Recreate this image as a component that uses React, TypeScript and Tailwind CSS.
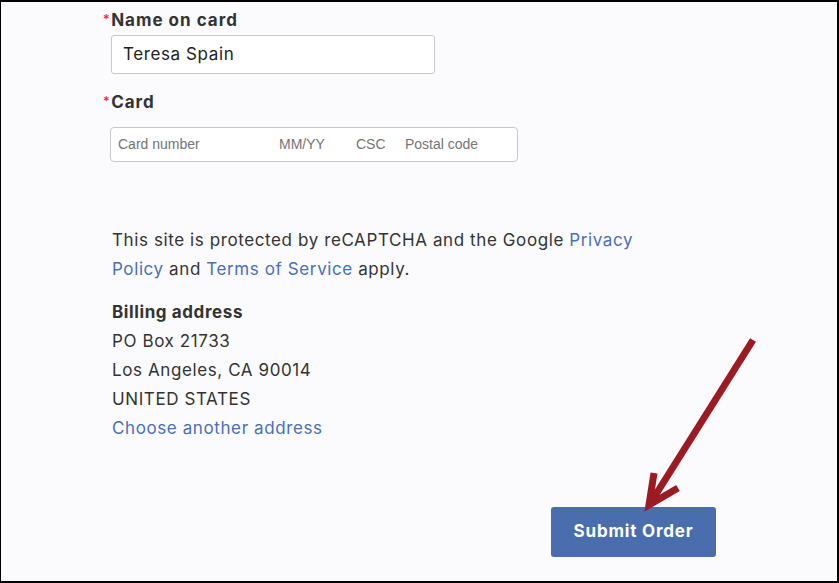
import React from "react";

// Checkout payment section with an annotation arrow pointing at the submit button
export default function App() {
  return (
    <div
      className="relative w-[839px] h-[583px] bg-[#fbfbfe] border-t-2 border-l border-r-2 border-b-2 border-black overflow-hidden text-[#333333] tracking-[0.6px]"
      style={{ fontFamily: "Inter, 'Noto Sans', sans-serif" }}
    >
      <div className="pl-[102px] pt-[7px]">
        {/* Name on card */}
        <div className="flex items-start">
          <span className="text-[#e02020] text-[13px] leading-none mt-[4px] mr-[1px]">*</span>
          <span className="text-[17px] font-bold leading-[22px] text-[#333] tracking-[1px]">Name on card</span>
        </div>
        <div className="ml-[8px] mt-[4px] w-[324px] h-[39px] bg-white border border-[#c8c8c8] rounded-[3px] flex items-center px-[11px]">
          <span className="text-[17px] text-[#222]">Teresa Spain</span>
        </div>

        {/* Card */}
        <div className="flex items-start mt-[17px]">
          <span className="text-[#e02020] text-[13px] leading-none mt-[4px] mr-[1px]">*</span>
          <span className="text-[17px] font-bold leading-[22px] text-[#333] tracking-[1px]">Card</span>
        </div>
        <div
          className="ml-[7px] mt-[14px] w-[408px] h-[35px] bg-white border border-[#c8c8c8] rounded-[4px] flex items-center text-[14px] text-[#757575] tracking-normal"
          style={{ fontFamily: "'Liberation Sans', Arial, sans-serif" }}
        >
          <span className="ml-[7px] w-[161px]">Card number</span>
          <span className="w-[77px]">MM/YY</span>
          <span className="w-[49px]">CSC</span>
          <span>Postal code</span>
        </div>

        {/* reCAPTCHA notice */}
        <p className="ml-[9px] mt-[64px] w-[545px] text-[17px] leading-[29px] text-[#333]">
          This site is protected by reCAPTCHA and the Google{" "}
          <a className="text-[#4a6fb5]">Privacy Policy</a> and{" "}
          <a className="text-[#4a6fb5]">Terms of Service</a> apply.
        </p>

        {/* Billing address */}
        <div className="ml-[9px] mt-[14px] text-[17px] leading-[29px] text-[#333]">
          <div className="font-bold">Billing address</div>
          <div>PO Box 21733</div>
          <div>Los Angeles, CA 90014</div>
          <div>UNITED STATES</div>
          <a className="text-[#4a6fb5]">Choose another address</a>
        </div>

        <div className="flex ml-[448px] mt-[64px]">
          <button className="w-[165px] h-[50px] bg-[#4a6dae] rounded-[3px] text-white text-[17px] font-bold tracking-[0.8px]">
            Submit Order
          </button>
        </div>
      </div>

      {/* annotation arrow */}
      <svg className="absolute left-0 top-0" width="839" height="583" viewBox="0 0 839 583">
        <g stroke="#9c1a22" strokeWidth="7" fill="none" strokeLinecap="butt" strokeLinejoin="miter">
          <line x1="752" y1="338" x2="652" y2="497" />
          <polyline points="653,471 648,503 677,486" />
        </g>
      </svg>
    </div>
  );
}
